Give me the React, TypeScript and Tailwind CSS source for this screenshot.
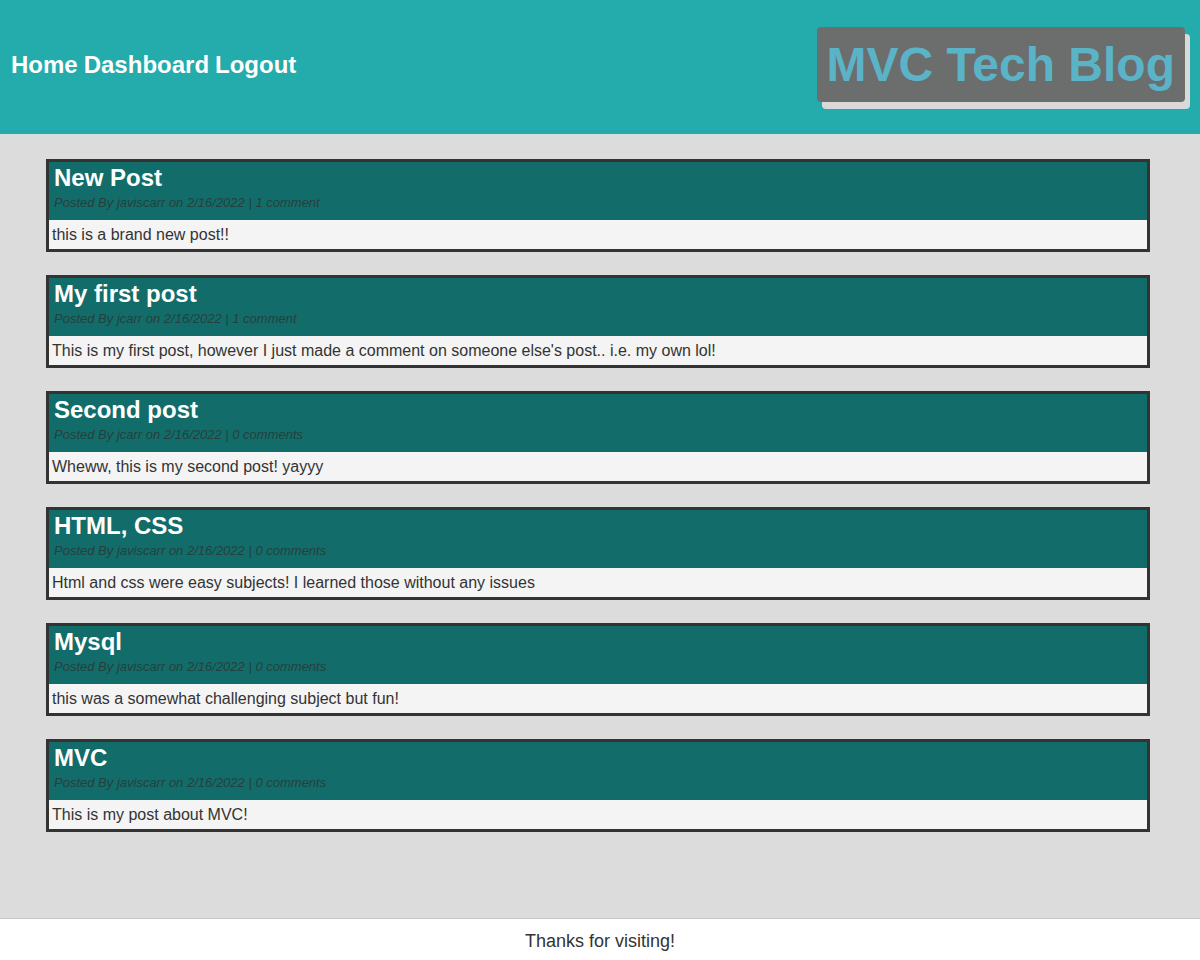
const posts = [
  { title: "New Post", author: "javiscarr", comments: "1 comment", body: "this is a brand new post!!" },
  { title: "My first post", author: "jcarr", comments: "1 comment", body: "This is my first post, however I just made a comment on someone else's post.. i.e. my own lol!" },
  { title: "Second post", author: "jcarr", comments: "0 comments", body: "Wheww, this is my second post! yayyy" },
  { title: "HTML, CSS", author: "javiscarr", comments: "0 comments", body: "Html and css were easy subjects! I learned those without any issues" },
  { title: "Mysql", author: "javiscarr", comments: "0 comments", body: "this was a somewhat challenging subject but fun!" },
  { title: "MVC", author: "javiscarr", comments: "0 comments", body: "This is my post about MVC!" },
]

export default function App() {
  return (
    <div className="flex min-h-[960px] flex-col font-['Liberation_Sans',Arial,sans-serif] text-[#333]">
      <header className="flex h-[134px] items-start justify-between bg-[#24abab] pl-[11px] pr-[15px]">
        <nav className="mt-[51px] flex gap-[6px] text-[24px] font-bold leading-[28px] text-white">
          <a href="#">Home</a>
          <a href="#">Dashboard</a>
          <a href="#">Logout</a>
        </nav>
        <h1 className="mt-[27px] rounded-[4px] bg-[#6b6e6d] px-[10px] py-[10px] text-[48px] font-bold leading-[55px] text-[#5bb3c8] shadow-[5px_7px_0_#d9d9d9]">
          MVC Tech Blog
        </h1>
      </header>

      <main className="flex flex-1 flex-col gap-[23px] bg-[#dcdcdc] pl-[46px] pt-[25px]">
        {posts.map((post) => (
          <article key={post.title} className="w-[1104px] border-[3px] border-[#333]">
            <div className="h-[58px] bg-[#126d6a] px-[5px]">
              <h2 className="text-[24px] font-bold leading-[32px] text-white">{post.title}</h2>
              <p className="text-[13px] italic leading-[18px] text-[#263f3d]">
                Posted By {post.author} on 2/16/2022 | {post.comments}
              </p>
            </div>
            <div className="h-[29px] bg-[#f4f4f4] px-[3px] text-[16px] leading-[29px]">{post.body}</div>
          </article>
        ))}
      </main>

      <footer className="flex h-[42px] items-center justify-center border-t border-[#c8c8c8] bg-white pt-[3px] text-[18px] text-[#333]">
        Thanks for visiting!
      </footer>
    </div>
  )
}
